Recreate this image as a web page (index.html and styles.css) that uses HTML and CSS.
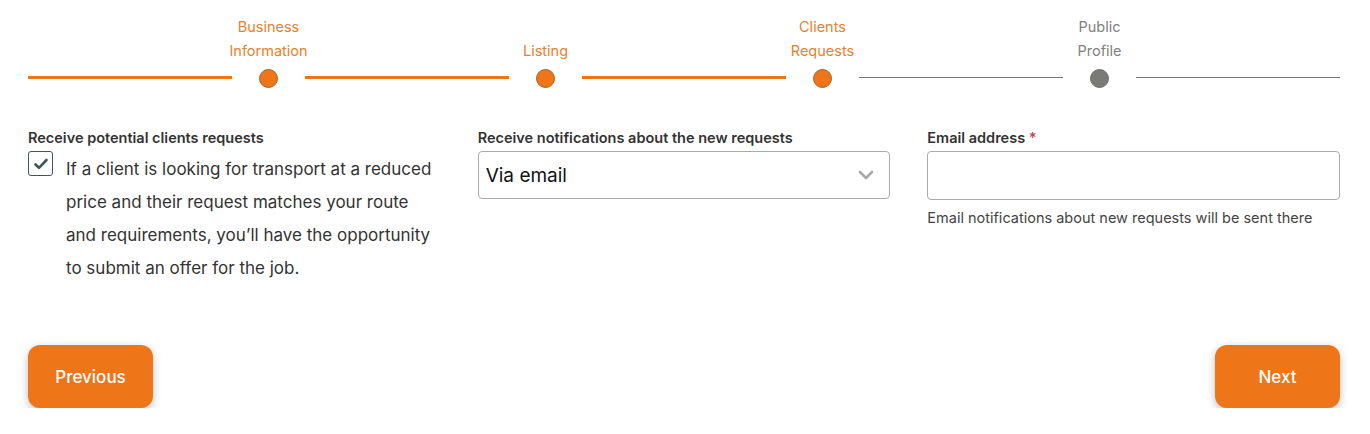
FILE: index.html
```html
<!DOCTYPE html>
<html>
<head>
    <meta charset="UTF-8">
    <title>Clients Requests</title>
    <link rel="stylesheet" href="styles.css">
</head>
<body>
    <div class="page">
        <!-- 步骤条 -->
        <div class="stepper">
            <div class="line done"></div>
            <div class="step done">
                <div class="step-label">Business<br>Information</div>
                <div class="dot"></div>
            </div>
            <div class="line done"></div>
            <div class="step done">
                <div class="step-label">Listing</div>
                <div class="dot"></div>
            </div>
            <div class="line done"></div>
            <div class="step done">
                <div class="step-label">Clients<br>Requests</div>
                <div class="dot"></div>
            </div>
            <div class="line"></div>
            <div class="step">
                <div class="step-label">Public<br>Profile</div>
                <div class="dot"></div>
            </div>
            <div class="line"></div>
        </div>

        <!-- 表单 -->
        <div class="form-grid">
            <div class="field">
                <div class="label">Receive potential clients requests</div>
                <label class="check-row">
                    <span class="checkbox">
                        <svg width="18" height="18" viewBox="0 0 18 18"><path d="M3.5 9.5l3.5 3.3L14.5 5" fill="none" stroke="#3f5566" stroke-width="2.6" stroke-linecap="round" stroke-linejoin="round"/></svg>
                    </span>
                    <span class="check-text">If a client is looking for transport at a reduced price and their request matches your route and requirements, you’ll have the opportunity to submit an offer for the job.</span>
                </label>
            </div>
            <div class="field">
                <div class="label">Receive notifications about the new requests</div>
                <div class="select">
                    <span>Via email</span>
                    <svg width="18" height="12" viewBox="0 0 18 12"><path d="M3 3l6 6 6-6" fill="none" stroke="#a8a8a8" stroke-width="2.6" stroke-linecap="round" stroke-linejoin="round"/></svg>
                </div>
            </div>
            <div class="field">
                <div class="label">Email address <span class="req">*</span></div>
                <input class="input" type="text">
                <div class="hint">Email notifications about new requests will be sent there</div>
            </div>
        </div>

        <div class="actions">
            <button class="btn">Previous</button>
            <button class="btn">Next</button>
        </div>
    </div>
</body>
</html>
```

FILE: styles.css
```css
/* 页面css */
body{
    margin: 0;
    font-family: Inter, "Noto Sans", sans-serif;
    color: #333;
    background: #fff;
}

.page{
    padding: 0 30px 0 28px;
}

/* 步骤条 */
.stepper{
    display: flex;
    align-items: flex-end;
    height: 88px;
}
.line{
    flex: 1;
    height: 1px;
    background: #777;
    margin-bottom: 10px;
}
.line.done{
    height: 3px;
    background: #ee7518;
    margin-bottom: 9px;
}
.step{
    width: 73px;
    display: flex;
    flex-direction: column;
    align-items: center;
}
.step-label{
    font-size: 14.5px;
    line-height: 24px;
    text-align: center;
    color: #808080;
    margin-bottom: 6px;
}
.step.done .step-label{
    color: #e8812b;
}
.dot{
    width: 17px;
    height: 17px;
    border-radius: 50%;
    background: #7a7a78;
    border: 1px solid #6d6d6b;
}
.step.done .dot{
    background: #ee7518;
    border-color: #a8622a;
}

/* 表单 */
.form-grid{
    display: grid;
    grid-template-columns: 1fr 1fr 1fr;
    column-gap: 37px;
    margin-top: 40px;
}
.label{
    font-size: 14.5px;
    font-weight: 600;
    color: #333;
    line-height: 20px;
    margin-bottom: 3px;
}
.req{
    color: #c0455a;
}
.check-row{
    display: flex;
    align-items: flex-start;
}
.checkbox{
    flex: none;
    width: 23px;
    height: 23px;
    border: 1px solid #3f5566;
    border-radius: 3px;
    display: flex;
    align-items: center;
    justify-content: center;
    margin-right: 13px;
}
.check-text{
    font-size: 17px;
    line-height: 33px;
    margin-top: 2px;
    color: #333;
}
.select{
    height: 46px;
    border: 1px solid #aaa;
    border-radius: 4px;
    display: flex;
    align-items: center;
    justify-content: space-between;
    padding: 0 14px 0 7px;
    font-size: 19px;
    color: #111;
}
.input{
    display: block;
    box-sizing: border-box;
    width: 100%;
    height: 49px;
    border: 1px solid #aaa;
    border-radius: 4px;
    margin: 0;
}
.hint{
    font-size: 14.5px;
    color: #444;
    margin-top: 9px;
}

/* 按钮 */
.actions{
    display: flex;
    justify-content: space-between;
    margin-top: 60px;
}
.btn{
    width: 125px;
    height: 63px;
    border: 0;
    border-radius: 12px;
    background: #ee7518;
    color: #fff;
    font-family: Inter, "Noto Sans", sans-serif;
    font-size: 17px;
    font-weight: 500;
    box-shadow: 0 3px 8px rgba(0,0,0,0.25);
}
```
